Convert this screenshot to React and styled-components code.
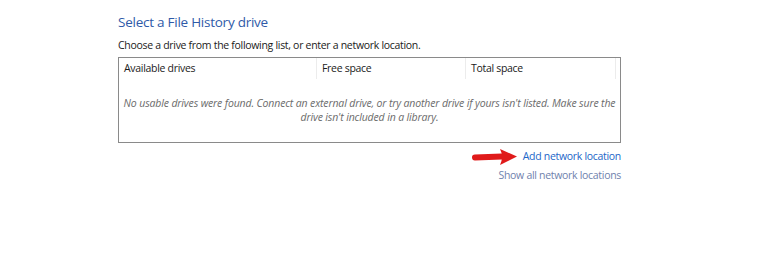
import React from "react";
import styled, { createGlobalStyle } from "styled-components";

const GlobalStyle = createGlobalStyle`
  html, body {
    margin: 0;
    padding: 0;
    background: #ffffff;
  }
  body {
    font-family: "Open Sans", "Noto Sans", "Liberation Sans", sans-serif;
    color: #1a1a1a;
  }
`;

const columns = [
  { label: "Available drives", width: 198 },
  { label: "Free space", width: 149 },
  { label: "Total space", width: 150 },
];

function RedArrow() {
  return (
    <svg width="46" height="18" viewBox="0 0 46 18">
      <path
        d="M3 9.5 L30 8.5"
        stroke="#e01a1a"
        strokeWidth="6"
        strokeLinecap="round"
        fill="none"
      />
      <path d="M28 1 L45 8.5 L28 17 Q32 8.5 28 1 Z" fill="#e01a1a" />
    </svg>
  );
}

function App() {
  return (
    <Page>
      <GlobalStyle />
      <Panel>
        <Title>Select a File History drive</Title>
        <Subtitle>
          Choose a drive from the following list, or enter a network location.
        </Subtitle>
        <DriveList>
          <HeaderRow>
            {columns.map((col) => (
              <HeaderCell key={col.label} $width={col.width}>
                {col.label}
              </HeaderCell>
            ))}
            <HeaderFiller />
          </HeaderRow>
          <EmptyMessage>
            No usable drives were found. Connect an external drive, or try
            another drive if yours isn't listed. Make sure the drive isn't
            included in a library.
          </EmptyMessage>
        </DriveList>
        <LinkArea>
          <LinkRow>
            <RedArrow />
            <Link $primary>Add network location</Link>
          </LinkRow>
          <LinkRow>
            <Link>Show all network locations</Link>
          </LinkRow>
        </LinkArea>
      </Panel>
    </Page>
  );
}

const Page = styled.div`
  width: 768px;
  height: 271px;
  padding: 12px 0 0 118px;
  box-sizing: border-box;
`;

const Panel = styled.div`
  width: 503px;
  display: flex;
  flex-direction: column;
`;

const Title = styled.h1`
  margin: 0;
  font-size: 13.5px;
  font-weight: 400;
  line-height: 20px;
  color: #2f5aa8;
  letter-spacing: -0.25px;
`;

const Subtitle = styled.p`
  margin: 6px 0 0;
  font-size: 10.5px;
  line-height: 15px;
  color: #1a1a1a;
  letter-spacing: -0.3px;
`;

const DriveList = styled.div`
  margin-top: 4px;
  height: 86px;
  box-sizing: border-box;
  border: 1px solid #8a8a8a;
  display: flex;
  flex-direction: column;
`;

const HeaderRow = styled.div`
  display: flex;
  height: 21px;
`;

const HeaderCell = styled.div`
  width: ${(p) => p.$width}px;
  box-sizing: border-box;
  padding: 2px 0 0 5px;
  font-size: 10.5px;
  line-height: 17px;
  color: #1a1a1a;
  border-right: 1px solid #ececec;
  letter-spacing: -0.3px;
`;

const HeaderFiller = styled.div`
  flex: 1;
`;

const EmptyMessage = styled.p`
  margin: 17px 0 0;
  font-size: 10.5px;
  line-height: 14px;
  font-style: italic;
  text-align: center;
  color: #6b6b6b;
  letter-spacing: -0.14px;
`;

const LinkArea = styled.div`
  display: flex;
  flex-direction: column;
  align-items: flex-end;
  margin-top: 6px;
  gap: 4px;
`;

const LinkRow = styled.div`
  display: flex;
  align-items: center;
  gap: 5px;
  height: 15px;
`;

const Link = styled.span`
  font-size: 10.5px;
  line-height: 15px;
  letter-spacing: -0.3px;
  color: ${(p) => (p.$primary ? "#2266c8" : "#6f82ad")};
  cursor: pointer;
`;

export default App;
